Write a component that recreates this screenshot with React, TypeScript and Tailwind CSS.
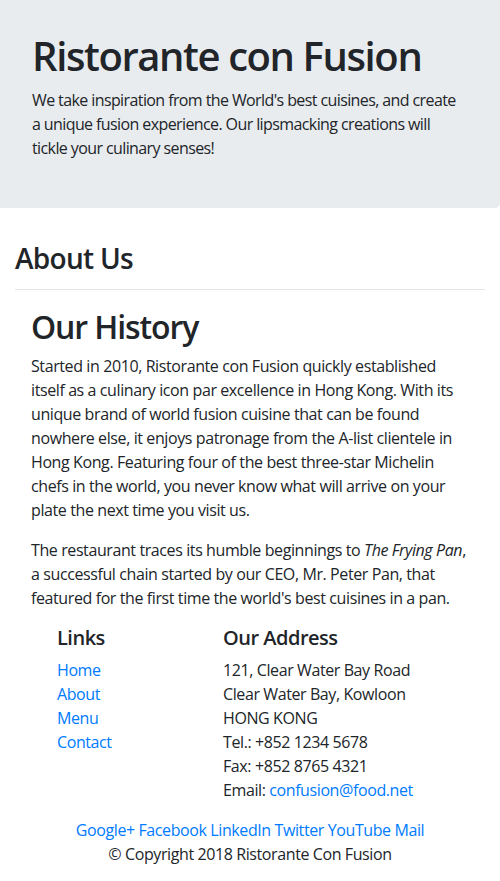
import React from 'react';

const links = ['Home', 'About', 'Menu', 'Contact'];
const social = ['Google+', 'Facebook', 'LinkedIn', 'Twitter', 'YouTube', 'Mail'];

const App: React.FC = () => {
  return (
    <div className="bg-white text-[#212529] text-base leading-6" style={{ fontFamily: "'Open Sans', 'Noto Sans', sans-serif" }}>
      <header className="bg-[#e9ecef] rounded-br-[5px] px-8 py-8 mb-[33px]">
        <h1 className="text-[40px] leading-[48px] font-semibold tracking-[-1.4px] mb-2">Ristorante con Fusion</h1>
        <p className="mb-4 max-w-[430px] tracking-[-0.6px]">
          We take inspiration from the World's best cuisines, and create a unique fusion experience. Our lipsmacking creations will tickle your culinary senses!
        </p>
      </header>

      <div className="px-[15px]">
        <h3 className="text-[28px] leading-[34px] font-semibold tracking-[-0.7px]">About Us</h3>
        <hr className="border-t border-[#e5e5e5] mt-[14px] mb-[18px]" />
      </div>

      <section className="px-[31px]">
        <h2 className="text-[32px] leading-[38px] font-semibold tracking-[-1.1px] mb-2">Our History</h2>
        <p className="mb-4 tracking-[-0.4px]">
          Started in 2010, Ristorante con Fusion quickly established itself as a culinary icon par excellence in Hong Kong. With its unique brand of world fusion cuisine that can be found nowhere else, it enjoys patronage from the A-list clientele in Hong Kong. Featuring four of the best three-star Michelin chefs in the world, you never know what will arrive on your plate the next time you visit us.
        </p>
        <p className="tracking-[-0.4px]">
          The restaurant traces its humble beginnings to <em>The Frying Pan</em>, a successful chain started by our CEO, Mr. Peter Pan, that featured for the first time the world's best cuisines in a pan.
        </p>
      </section>

      <footer className="pt-[16px] pb-4 tracking-[-0.4px]">
        <div className="flex px-[57px]">
          <div className="w-[166px]">
            <h5 className="text-xl leading-6 font-semibold tracking-[-0.5px] mb-2">Links</h5>
            <ul>
              {links.map((l) => (
                <li key={l}><a href="#" className="text-[#007bff]">{l}</a></li>
              ))}
            </ul>
          </div>
          <div>
            <h5 className="text-xl leading-6 font-semibold tracking-[-0.5px] mb-2">Our Address</h5>
            <address className="not-italic">
              121, Clear Water Bay Road<br />
              Clear Water Bay, Kowloon<br />
              HONG KONG<br />
              Tel.: +852 1234 5678<br />
              Fax: +852 8765 4321<br />
              Email: <a href="#" className="text-[#007bff]">confusion@food.net</a>
            </address>
          </div>
        </div>
        <div className="text-center mt-[16px]">
          {social.map((s, i) => (
            <React.Fragment key={s}>
              <a href="#" className="text-[#007bff]">{s}</a>{i < social.length - 1 ? ' ' : ''}
            </React.Fragment>
          ))}
        </div>
        <p className="text-center">© Copyright 2018 Ristorante Con Fusion</p>
      </footer>
    </div>
  );
};

export default App;
